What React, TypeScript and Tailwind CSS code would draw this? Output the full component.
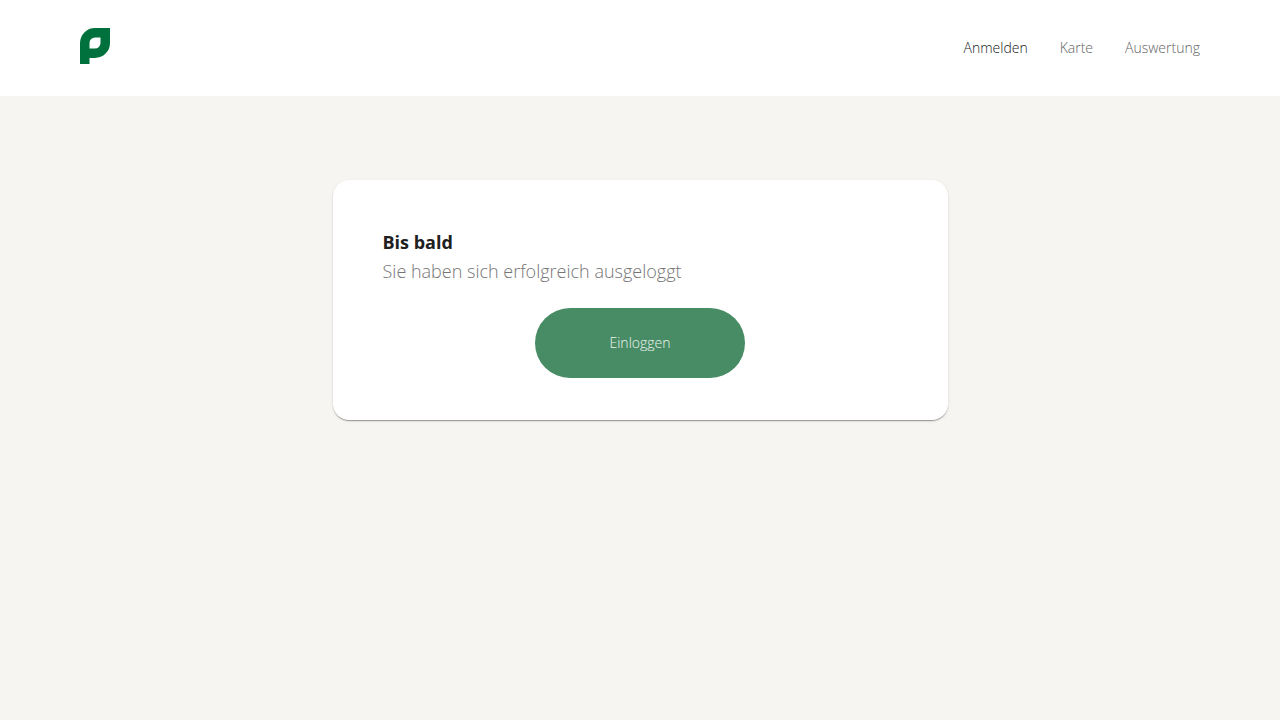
const links = [
  { label: "Anmelden", active: true },
  { label: "Karte", active: false },
  { label: "Auswertung", active: false },
];

function Logo() {
  return (
    <svg width="30" height="36" viewBox="0 0 30 36" aria-hidden="true">
      <path
        fill="#00703c"
        fillRule="evenodd"
        d="M0 36V15A15 15 0 0 1 15 0H30V15A15 15 0 0 1 15 30H9.500V36ZM9.500 20.500V15A5.500 5.500 0 0 1 15 9.500H20.500V15A5.500 5.500 0 0 1 15 20.500Z"
      />
    </svg>
  );
}

export default function App() {
  return (
    <div className="min-h-screen bg-[#f6f5f1] font-['Open_Sans',sans-serif] font-light">
      <header className="flex h-24 items-center justify-between bg-white px-20">
        <a href="#start" aria-label="Startseite" className="pb-1">
          <Logo />
        </a>
        <nav className="flex gap-8 text-sm">
          {links.map((link) => (
            <a
              key={link.label}
              href={"#" + link.label.toLowerCase()}
              aria-current={link.active ? "page" : undefined}
              className={link.active ? "text-[#202020]" : "text-[#636363]"}
            >
              {link.label}
            </a>
          ))}
        </nav>
      </header>
      <main className="flex justify-center px-5 pt-21 pb-10">
        <section className="flex w-full max-w-[615px] flex-col rounded-2xl bg-white px-[50px] pt-12 pb-[42px] shadow-[0_2px_1px_-1px_rgba(0,0,0,0.2),0_1px_1px_0_rgba(0,0,0,0.14),0_1px_3px_0_rgba(0,0,0,0.12)]">
          <h1 className="text-lg leading-7 font-bold text-[#202020]">Bis bald</h1>
          <p className="text-lg leading-[30px] text-[#757575]">
            Sie haben sich erfolgreich ausgeloggt
          </p>
          <button
            type="button"
            className="mt-[22px] h-[70px] w-[210px] cursor-pointer self-center rounded-full bg-[#488c65] text-sm text-white/90"
          >
            Einloggen
          </button>
        </section>
      </main>
    </div>
  );
}
